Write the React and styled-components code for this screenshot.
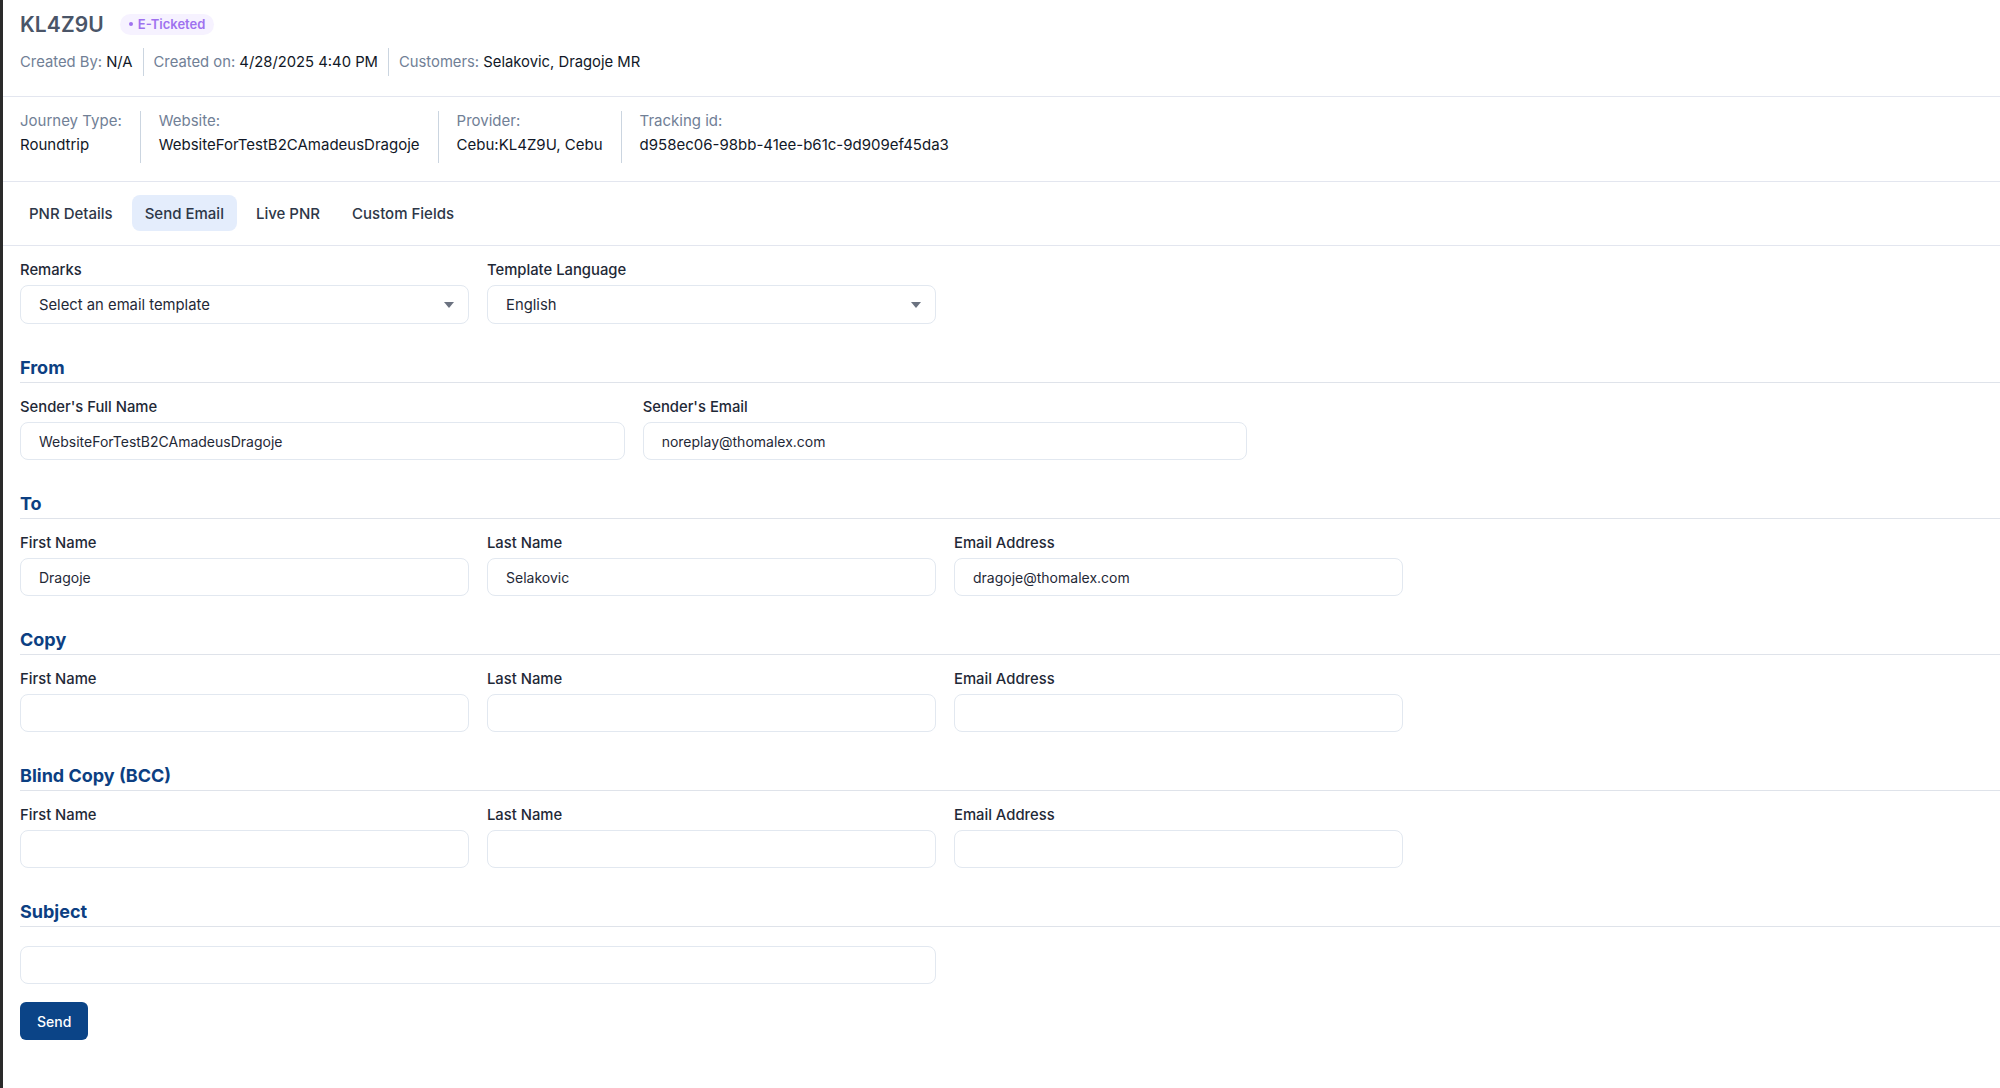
import React from "react";
import styled, { createGlobalStyle } from "styled-components";

const GlobalStyle = createGlobalStyle`
  html, body {
    margin: 0;
    padding: 0;
    background: #ffffff;
    font-family: Inter, "Noto Sans", "Liberation Sans", sans-serif;
    color: #1f2937;
  }
  * { box-sizing: border-box; }
`;

const Page = styled.div`
  min-height: 100vh;
  border-left: 3px solid #2a2a2a;
`;

const Header = styled.header`
  padding: 10px 17px 20px;
  border-bottom: 1px solid #e3e6ef;
`;

const TitleRow = styled.div`
  display: flex;
  align-items: center;
  gap: 16px;
  height: 28px;
`;

const Title = styled.h1`
  margin: 0;
  font-size: 21px;
  font-weight: 600;
  color: #4a5568;
  letter-spacing: 0.1px;
`;

const Badge = styled.span`
  display: inline-flex;
  align-items: center;
  gap: 5px;
  height: 21px;
  padding: 0 9px;
  border-radius: 11px;
  background: #f6f2ff;
  color: #9f72ef;
  font-size: 13px;
  font-weight: 600;

  &::before {
    content: "";
    width: 4px;
    height: 4px;
    border-radius: 50%;
    background: #9f72ef;
  }
`;

const MetaRow = styled.div`
  display: flex;
  align-items: center;
  margin-top: 10px;
  height: 28px;
`;

const MetaItem = styled.div`
  padding: 0 10px;
  font-size: 14.8px;
  line-height: 28px;
  color: #111827;
  border-left: 1px solid #cbd5e0;

  &:first-child {
    padding-left: 0;
    border-left: none;
  }

  span {
    color: #718096;
  }
`;

const InfoBar = styled.section`
  display: flex;
  padding: 14px 17px 18px;
  border-bottom: 1px solid #e3e6ef;
`;

const InfoCol = styled.div`
  padding: 0 18px 8px;
  border-left: 1px solid #cbd5e0;

  &:first-child {
    padding-left: 0;
    border-left: none;
  }
`;

const InfoLabel = styled.div`
  font-size: 15px;
  line-height: 20px;
  color: #718096;
`;

const InfoValue = styled.div`
  margin-top: 4px;
  font-size: 15px;
  line-height: 20px;
  color: #111827;
`;

const TabBar = styled.nav`
  display: flex;
  gap: 6px;
  padding: 13px 13px 14px;
  border-bottom: 1px solid #e3e6ef;
`;

const Tab = styled.button`
  height: 36px;
  padding: 0 13px;
  border: none;
  border-radius: 8px;
  background: ${(p) => (p.$active ? "#e4edfc" : "transparent")};
  color: #2d3748;
  font-family: inherit;
  font-size: 15px;
  font-weight: 500;
  cursor: pointer;
`;

const Form = styled.form`
  padding: 14px 0 40px 17px;
`;

const Grid = styled.div`
  display: grid;
  grid-template-columns: repeat(${(p) => p.$cols || 4}, 1fr);
  column-gap: 18px;
  width: 1850px;
  margin-top: ${(p) => p.$top || 0}px;
`;

const Field = styled.label`
  display: flex;
  flex-direction: column;
  gap: 5px;
  grid-column: span ${(p) => p.$span || 1};
`;

const LabelText = styled.span`
  font-size: 14.8px;
  font-weight: 500;
  line-height: 20px;
  color: #1f2937;
`;

const Input = styled.input`
  height: 38px;
  width: 100%;
  padding: 0 18px;
  border: 1px solid #e2e8f0;
  border-radius: 8px;
  background: #fff;
  font-family: inherit;
  font-size: 14px;
  color: #1f2937;
  outline: none;
`;

const SelectBox = styled.div`
  display: flex;
  align-items: center;
  justify-content: space-between;
  height: 39px;
  padding: 0 14px 0 18px;
  border: 1px solid #e2e8f0;
  border-radius: 8px;
  background: #fff;
  font-size: 14.8px;
  color: #1f2937;
`;

const Section = styled.section`
  margin-top: 30px;
`;

const SectionTitle = styled.h2`
  margin: 0;
  font-size: 18px;
  font-weight: 700;
  line-height: 28px;
  color: #0c3f82;
  border-bottom: 1px solid #dfe3ea;
`;

const SendButton = styled.button`
  margin-top: 18px;
  height: 38px;
  padding: 0 17px;
  border: none;
  border-radius: 6px;
  background: #0b4487;
  color: #fff;
  font-family: inherit;
  font-size: 14px;
  font-weight: 500;
  cursor: pointer;
`;

const Caret = () => (
  <svg width="10" height="6" viewBox="0 0 10 6">
    <path d="M0 0h10L5 6z" fill="#6b7280" />
  </svg>
);

const Select = ({ label, value }) => (
  <Field as="div">
    <LabelText>{label}</LabelText>
    <SelectBox>
      {value}
      <Caret />
    </SelectBox>
  </Field>
);

const TextField = ({ label, value = "", span }) => (
  <Field $span={span}>
    {label && <LabelText>{label}</LabelText>}
    <Input defaultValue={value} />
  </Field>
);

const PersonSection = ({ title, first, last, email }) => (
  <Section>
    <SectionTitle>{title}</SectionTitle>
    <Grid $top={14}>
      <TextField label="First Name" value={first} />
      <TextField label="Last Name" value={last} />
      <TextField label="Email Address" value={email} />
    </Grid>
  </Section>
);

const tabs = ["PNR Details", "Send Email", "Live PNR", "Custom Fields"];

export default function App() {
  return (
    <Page>
      <GlobalStyle />
      <Header>
        <TitleRow>
          <Title>KL4Z9U</Title>
          <Badge>E-Ticketed</Badge>
        </TitleRow>
        <MetaRow>
          <MetaItem>
            <span>Created By:</span> N/A
          </MetaItem>
          <MetaItem>
            <span>Created on:</span> 4/28/2025 4:40 PM
          </MetaItem>
          <MetaItem>
            <span>Customers:</span> Selakovic, Dragoje MR
          </MetaItem>
        </MetaRow>
      </Header>

      <InfoBar>
        <InfoCol>
          <InfoLabel>Journey Type:</InfoLabel>
          <InfoValue>Roundtrip</InfoValue>
        </InfoCol>
        <InfoCol>
          <InfoLabel>Website:</InfoLabel>
          <InfoValue>WebsiteForTestB2CAmadeusDragoje</InfoValue>
        </InfoCol>
        <InfoCol>
          <InfoLabel>Provider:</InfoLabel>
          <InfoValue>Cebu:KL4Z9U, Cebu</InfoValue>
        </InfoCol>
        <InfoCol>
          <InfoLabel>Tracking id:</InfoLabel>
          <InfoValue>d958ec06-98bb-41ee-b61c-9d909ef45da3</InfoValue>
        </InfoCol>
      </InfoBar>

      <TabBar>
        {tabs.map((t) => (
          <Tab key={t} type="button" $active={t === "Send Email"}>
            {t}
          </Tab>
        ))}
      </TabBar>

      <Form onSubmit={(e) => e.preventDefault()}>
        <Grid>
          <Select label="Remarks" value="Select an email template" />
          <Select label="Template Language" value="English" />
        </Grid>

        <Section>
          <SectionTitle>From</SectionTitle>
          <Grid $cols={3} $top={14}>
            <TextField label="Sender's Full Name" value="WebsiteForTestB2CAmadeusDragoje" />
            <TextField label="Sender's Email" value="noreplay@thomalex.com" />
          </Grid>
        </Section>

        <PersonSection title="To" first="Dragoje" last="Selakovic" email="dragoje@thomalex.com" />
        <PersonSection title="Copy" />
        <PersonSection title="Blind Copy (BCC)" />

        <Section>
          <SectionTitle>Subject</SectionTitle>
          <Grid $top={19}>
            <TextField span={2} />
          </Grid>
        </Section>

        <SendButton type="submit">Send</SendButton>
      </Form>
    </Page>
  );
}
